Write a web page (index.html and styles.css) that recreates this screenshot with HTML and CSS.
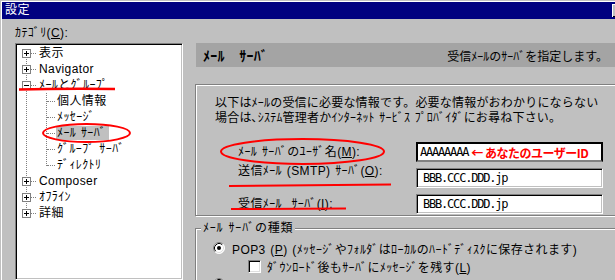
FILE: index.html
```html
<!DOCTYPE html>
<html lang="ja">
<head>
<meta charset="utf-8">
<title>設定</title>
<link rel="stylesheet" href="styles.css">
</head>
<body>
<div class="window">
  <div class="titlebar"><span class="title">設定</span><span class="tbtn"></span></div>
  <div class="main">
    <div class="left">
      <div class="catlabel">ｶﾃｺﾞﾘ(<u>C</u>):</div>
      <div class="tree">
        <div class="row top first"><svg class="tw" viewBox="0 0 9 9"><rect x=".5" y=".5" width="8" height="8" fill="#fff" stroke="#808080"/><path d="M2 4.5h5M4.5 2v5" stroke="#000"/></svg><span class="hd"></span><span class="lbl">表示</span></div>
        <div class="row top"><svg class="tw" viewBox="0 0 9 9"><rect x=".5" y=".5" width="8" height="8" fill="#fff" stroke="#808080"/><path d="M2 4.5h5M4.5 2v5" stroke="#000"/></svg><span class="hd"></span><span class="lbl">Navigator</span></div>
        <div class="row top"><svg class="tw" viewBox="0 0 9 9"><rect x=".5" y=".5" width="8" height="8" fill="#fff" stroke="#808080"/><path d="M2 4.5h5" stroke="#000"/></svg><span class="hd"></span><span class="lbl">ﾒｰﾙとｸﾞﾙｰﾌﾟ</span></div>
        <div class="row child"><span class="hd"></span><span class="lbl">個人情報</span></div>
        <div class="row child"><span class="hd"></span><span class="lbl">ﾒｯｾｰｼﾞ</span></div>
        <div class="row child"><span class="hd"></span><span class="lbl sel">ﾒｰﾙ ｻｰﾊﾞ</span></div>
        <div class="row child"><span class="hd"></span><span class="lbl">ｸﾞﾙｰﾌﾟ ｻｰﾊﾞ</span></div>
        <div class="row child lastchild"><span class="hd"></span><span class="lbl">ﾃﾞｨﾚｸﾄﾘ</span></div>
        <div class="row top"><svg class="tw" viewBox="0 0 9 9"><rect x=".5" y=".5" width="8" height="8" fill="#fff" stroke="#808080"/><path d="M2 4.5h5M4.5 2v5" stroke="#000"/></svg><span class="hd"></span><span class="lbl">Composer</span></div>
        <div class="row top"><svg class="tw" viewBox="0 0 9 9"><rect x=".5" y=".5" width="8" height="8" fill="#fff" stroke="#808080"/><path d="M2 4.5h5M4.5 2v5" stroke="#000"/></svg><span class="hd"></span><span class="lbl">ｵﾌﾗｲﾝ</span></div>
        <div class="row top last"><svg class="tw" viewBox="0 0 9 9"><rect x=".5" y=".5" width="8" height="8" fill="#fff" stroke="#808080"/><path d="M2 4.5h5M4.5 2v5" stroke="#000"/></svg><span class="hd"></span><span class="lbl">詳細</span></div>
      </div>
    </div>
    <div class="right">
      <div class="header"><span class="htitle">ﾒｰﾙ　ｻｰﾊﾞ</span><span class="hdesc">受信ﾒｰﾙのｻｰﾊﾞを指定します。</span></div>
      <div class="group">
        <p class="desc">以下はﾒｰﾙの受信に必要な情報です。必要な情報がおわかりにならない<br>場合は､ｼｽﾃﾑ管理者かｲﾝﾀｰﾈｯﾄ ｻｰﾋﾞｽ ﾌﾟﾛﾊﾞｲﾀﾞにお尋ね下さい。</p>
        <div class="form">
          <span class="flabel">ﾒｰﾙ ｻｰﾊﾞのﾕｰｻﾞ名(<u>M</u>):</span>
          <div class="field focus">AAAAAAAA<span class="note">← あなたのユーザーID</span></div>
          <span class="flabel lift">送信ﾒｰﾙ (SMTP) ｻｰﾊﾞ(<u>O</u>):</span>
          <div class="field">BBB.CCC.DDD.jp</div>
          <span class="flabel">受信ﾒｰﾙ  ｻｰﾊﾞ(<u>I</u>):</span>
          <div class="field">BBB.CCC.DDD.jp</div>
        </div>
      </div>
      <fieldset class="types">
        <legend>ﾒｰﾙ ｻｰﾊﾞの種類</legend>
        <div class="opts">
          <div class="opt"><svg class="radio" viewBox="0 0 12 12"><circle cx="6" cy="6" r="5.5" fill="#fff"/><path d="M2.11 9.89A5.5 5.5 0 0 1 9.89 2.11" fill="none" stroke="#808080"/><path d="M9.89 2.11A5.5 5.5 0 0 1 2.11 9.89" fill="none" stroke="#fff"/><path d="M2.82 9.18A4.5 4.5 0 0 1 9.18 2.82" fill="none" stroke="#000"/><path d="M9.18 2.82A4.5 4.5 0 0 1 2.82 9.18" fill="none" stroke="#dfdfdf"/><circle cx="6" cy="6" r="2" fill="#000"/></svg><span>POP3 (<u>P</u>) (ﾒｯｾｰｼﾞやﾌｫﾙﾀﾞはﾛｰｶﾙのﾊｰﾄﾞﾃﾞｨｽｸに保存されます)</span></div>
          <div class="opt sub"><span class="check"></span><span>ﾀﾞｳﾝﾛｰﾄﾞ後もｻｰﾊﾞにﾒｯｾｰｼﾞを残す(<u>L</u>)</span></div>
          <div class="opt"><svg class="radio" viewBox="0 0 12 12"><circle cx="6" cy="6" r="5.5" fill="#fff"/><path d="M2.11 9.89A5.5 5.5 0 0 1 9.89 2.11" fill="none" stroke="#808080"/><path d="M9.89 2.11A5.5 5.5 0 0 1 2.11 9.89" fill="none" stroke="#fff"/><path d="M2.82 9.18A4.5 4.5 0 0 1 9.18 2.82" fill="none" stroke="#000"/><path d="M9.18 2.82A4.5 4.5 0 0 1 2.82 9.18" fill="none" stroke="#dfdfdf"/></svg></div>
        </div>
      </fieldset>
    </div>
  </div>
  <svg class="marks" viewBox="0 0 615 280">
    <path d="M19 89.5 Q60 88.5 115 89" fill="none" stroke="#f00" stroke-width="2.5"/>
    <ellipse cx="86.5" cy="133" rx="43.5" ry="9" fill="none" stroke="#f00" stroke-width="2"/>
    <ellipse cx="302.5" cy="151.5" rx="81.5" ry="12.5" fill="none" stroke="#f00" stroke-width="2"/>
    <path d="M229 186 L391 184.5" fill="none" stroke="#f00" stroke-width="2"/>
    <path d="M231 209 L346 208.5" fill="none" stroke="#f00" stroke-width="2"/>
  </svg>
</div>
</body>
</html>
```
FILE: styles.css
```css
* { box-sizing: border-box; }
html, body { margin: 0; padding: 0; }
body {
  width: 615px;
  height: 280px;
  overflow: hidden;
  background: #c0c0c0;
  font-family: "Liberation Sans", "Noto Sans CJK JP", sans-serif;
  font-size: 12px;
  letter-spacing: 0.4px;
  color: #000;
  word-spacing: 1px;
}
.window {
  position: relative;
  width: 615px;
  height: 280px;
  overflow: hidden;
  padding: 2px 0 0 2px;
  box-shadow: inset 1px 1px 0 #c0c0c0, inset 2px 2px 0 #fff;
  display: flex;
  flex-direction: column;
}
.titlebar {
  flex: none;
  height: 17px;
  background: #000080;
  color: #fff;
  display: flex;
  align-items: center;
  justify-content: space-between;
  padding-left: 3px;
  font-size: 12px;
  line-height: 17px;
}
.tbtn {
  width: 16px;
  height: 13px;
  background: #c0c0c0;
  box-shadow: inset 1px 1px 0 #fff, inset -1px -1px 0 #000;
  margin-right: -13px;
}
.main {
  flex: 1;
  min-height: 0;
  display: flex;
  padding-left: 13px;
}
.left {
  width: 168px;
  flex: none;
  display: flex;
  flex-direction: column;
}
.catlabel { line-height: 16px; margin-top: 6px; }
.tree {
  margin-top: 2px;
  flex: 1;
  background: #fff;
  border: 1px solid;
  border-color: #808080 #fff #fff #808080;
  box-shadow: inset 1px 1px 0 #000, inset -1px -1px 0 #c0c0c0;
  padding: 1px;
}
.row {
  height: 16px;
  display: flex;
  align-items: center;
  white-space: nowrap;
  line-height: 16px;
  background-image: repeating-linear-gradient(to bottom, #808080 0 1px, transparent 1px 2px);
  background-repeat: no-repeat;
  background-position: 9px 0;
  background-size: 1px 16px;
}
.row.first { background-position: 9px 8px; background-size: 1px 8px; }
.row.last { background-size: 1px 9px; }
.top { padding-left: 5px; }
.tw { width: 9px; height: 9px; flex: none; display: block; }
.hd { width: 5px; height: 0; border-top: 1px dotted #808080; flex: none; }
.top .lbl { margin-left: 3px; }
.child {
  padding-left: 30px;
  background-image: repeating-linear-gradient(to bottom, #808080 0 1px, transparent 1px 2px), repeating-linear-gradient(to bottom, #808080 0 1px, transparent 1px 2px);
  background-position: 9px 0, 29px 0;
  background-size: 1px 16px, 1px 16px;
}
.child.lastchild { background-size: 1px 16px, 1px 9px; }
.child .hd { width: 8px; }
.child .lbl { margin-left: 2px; }
.child .sel { margin-left: 1px; padding: 0 3px 0 1px; background: #c0c0c0; line-height: 14px; }

.right {
  width: 420px;
  flex: none;
  margin-left: 12px;
  padding-top: 24px;
}
.header {
  margin-left: 1px;
  height: 24px;
  background: #a4a4a4;
  display: flex;
  align-items: center;
  justify-content: space-between;
  padding: 0 7px;
}
.htitle { font-weight: bold; font-size: 14px; letter-spacing: 0.3px; }
.hdesc { font-size: 12px; letter-spacing: 0; }
.group {
  margin-top: 17px;
  margin-right: -10px;
  height: 132px;
  border: 1px solid #808080;
  box-shadow: inset 1px 1px 0 #fff, 1px 1px 0 #fff;
  padding: 11px 0 0 19px;
}
.desc { margin: 0; line-height: 15px; white-space: nowrap; letter-spacing: 0.2px; }
.form {
  display: grid;
  grid-template-columns: 178px 187px;
  row-gap: 6px;
  margin-top: 16px;
  margin-left: 23px;
}
.flabel { align-self: center; line-height: 16px; white-space: pre; }
.flabel.lift { align-self: start; margin-top: -5px; }
.field {
  height: 20px;
  background: #fff;
  border: 1px solid;
  border-color: #808080 #fff #fff #808080;
  box-shadow: inset 1px 1px 0 #000, inset -1px -1px 0 #c0c0c0;
  padding-left: 6px;
  display: flex;
  align-items: center;
  white-space: nowrap;
  overflow: hidden;
  font-family: "DejaVu Sans Mono", monospace;
  font-size: 12px;
  letter-spacing: -1.2px;
  word-spacing: 0;
}
.field.focus {
  border: 2px solid #000;
  border-bottom-color: #808080;
  box-shadow: none;
  padding-left: 2px;
}
.note {
  font-family: "Noto Sans CJK JP", "Liberation Sans", sans-serif;
  font-weight: bold;
  color: #f00;
  font-size: 12px;
  letter-spacing: -0.5px;
  margin-left: 3px;
}
.types {
  margin: 4px -10px 0 0;
  padding: 0;
  min-width: 0;
  border: 1px solid #808080;
  box-shadow: inset 1px 1px 0 #fff, 1px 1px 0 #fff;
}
.types legend {
  margin-left: 5px;
  padding: 0 2px;
  line-height: 16px;
  background: #c0c0c0;
  letter-spacing: 0.8px;
}
.opts { padding: 3px 0 0 17px; }
.opt {
  display: flex;
  align-items: center;
  height: 18px;
  white-space: nowrap;
}
.radio { width: 12px; height: 12px; flex: none; margin-right: 7px; display: block; }
.opt.sub { padding-left: 35px; }
.check {
  width: 13px;
  height: 13px;
  flex: none;
  margin-right: 6px;
  background: #fff;
  border: 1px solid;
  border-color: #808080 #fff #fff #808080;
  box-shadow: inset 1px 1px 0 #000, inset -1px -1px 0 #dfdfdf;
}
.marks {
  position: absolute;
  left: 0;
  top: 0;
  width: 615px;
  height: 280px;
  pointer-events: none;
}
```
